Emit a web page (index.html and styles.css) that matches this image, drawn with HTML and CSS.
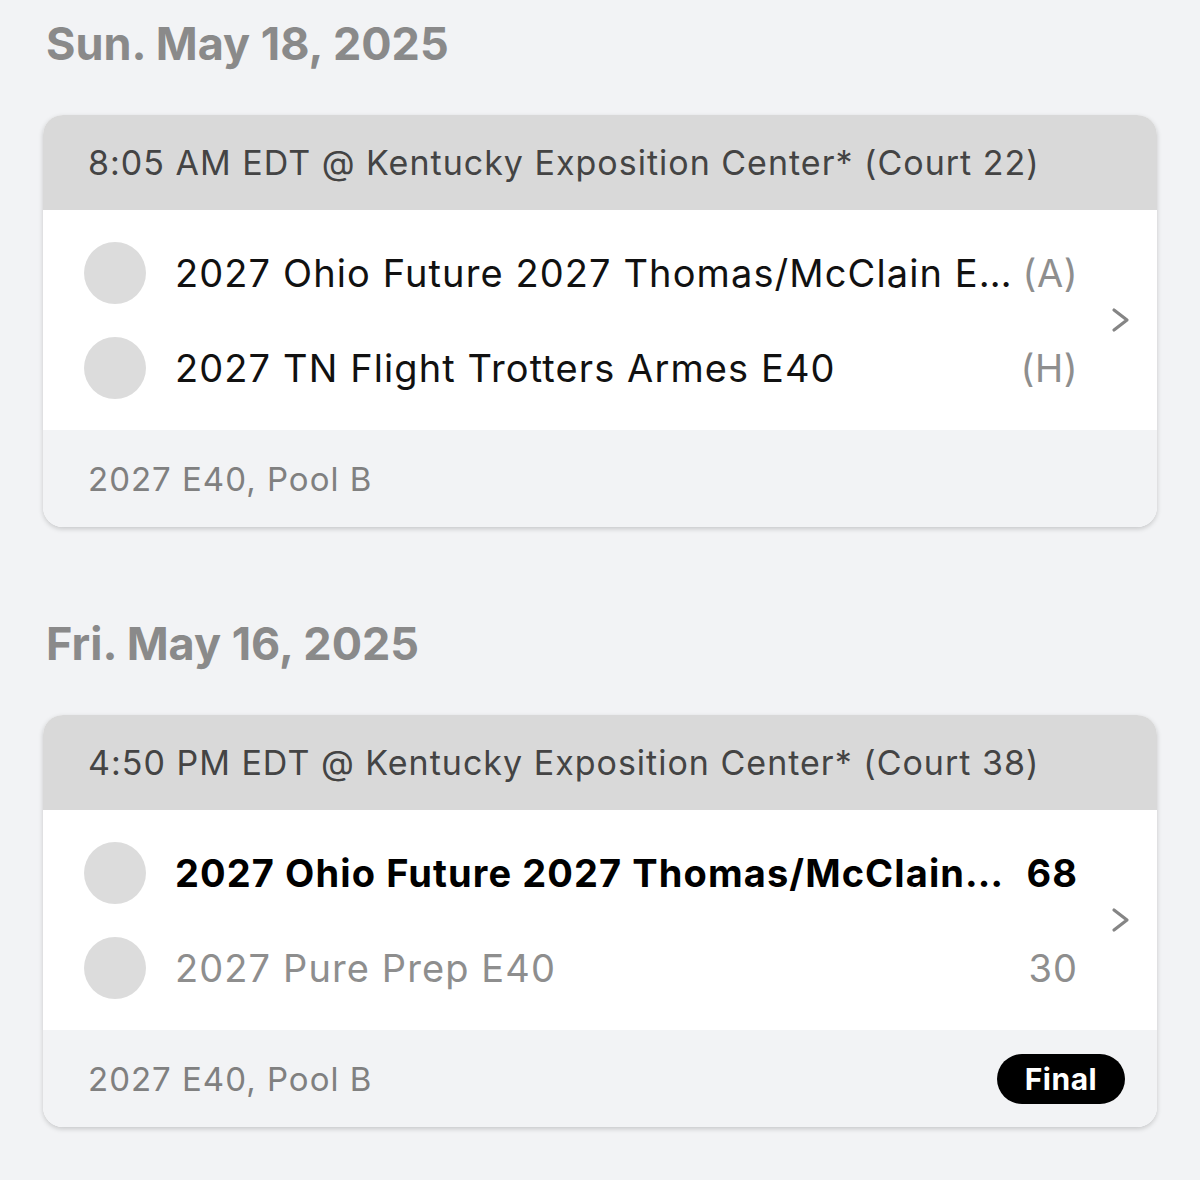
FILE: index.html
```html
<!DOCTYPE html>
<html>
<head>
<meta charset="utf-8">
<link rel="stylesheet" href="styles.css">
</head>
<body>
<div class="page">
  <section class="day">
    <h2 class="date">Sun. May 18, 2025</h2>
    <div class="card">
      <div class="card-head">8:05 AM EDT @ Kentucky Exposition Center* (Court 22)</div>
      <div class="card-body">
        <div class="rows">
          <div class="row">
            <span class="logo"></span>
            <span class="team">2027 Ohio Future 2027 Thomas/McClain E40</span>
            <span class="side">(A)</span>
          </div>
          <div class="row">
            <span class="logo"></span>
            <span class="team">2027 TN Flight Trotters Armes E40</span>
            <span class="side">(H)</span>
          </div>
        </div>
        <svg class="chev" width="20" height="28" viewBox="0 0 20 28"><path d="M3 4 L16 14 L3 24" fill="none" stroke="#858585" stroke-width="3.2" stroke-linecap="round" stroke-linejoin="round"/></svg>
      </div>
      <div class="card-foot"><span class="pool">2027 E40, Pool B</span></div>
    </div>
  </section>
  <section class="day">
    <h2 class="date">Fri. May 16, 2025</h2>
    <div class="card">
      <div class="card-head">4:50 PM EDT @ Kentucky Exposition Center* (Court 38)</div>
      <div class="card-body">
        <div class="rows">
          <div class="row">
            <span class="logo"></span>
            <span class="team win">2027 Ohio Future 2027 Thomas/McClain E40</span>
            <span class="score win">68</span>
          </div>
          <div class="row">
            <span class="logo"></span>
            <span class="team lose">2027 Pure Prep E40</span>
            <span class="score lose">30</span>
          </div>
        </div>
        <svg class="chev" width="20" height="28" viewBox="0 0 20 28"><path d="M3 4 L16 14 L3 24" fill="none" stroke="#858585" stroke-width="3.2" stroke-linecap="round" stroke-linejoin="round"/></svg>
      </div>
      <div class="card-foot"><span class="pool">2027 E40, Pool B</span><span class="badge">Final</span></div>
    </div>
  </section>
</div>
</body>
</html>
```

FILE: styles.css
```css
html, body {
  margin: 0;
  padding: 0;
  background: #f2f3f5;
  font-family: Inter, "Noto Sans", sans-serif;
}
.page {
  padding: 0 43px 0 43px;
}
.day {
  padding-bottom: 73px;
}
.date {
  margin: 0;
  height: 115px;
  box-sizing: border-box;
  padding: 16px 0 0 3px;
  font-size: 45px;
  line-height: 56px;
  font-weight: 700;
  color: #8a8a8a;
  letter-spacing: 0;
}
.card {
  border-radius: 20px;
  overflow: hidden;
  background: #fff;
  box-shadow: 0 2px 5px rgba(0,0,0,0.18);
}
.card-head {
  height: 95px;
  background: #d9d9d9;
  display: flex;
  align-items: center;
  padding-left: 45px;
  font-size: 34px;
  color: #444;
  letter-spacing: 1px;
}
.card-body {
  height: 220px;
  background: #fff;
  display: flex;
  align-items: center;
  padding: 0 26px 0 41px;
}
.rows {
  flex: 1;
  min-width: 0;
  padding-right: 33px;
}
.row {
  height: 95px;
  display: flex;
  align-items: center;
}
.logo {
  width: 62px;
  height: 62px;
  border-radius: 50%;
  background: #dcdcdc;
  flex: none;
  margin-right: 29px;
}
.team {
  flex: 1;
  min-width: 0;
  white-space: nowrap;
  overflow: hidden;
  text-overflow: ellipsis;
  font-size: 38px;
  color: #111;
  letter-spacing: 1.1px;
}
.side {
  flex: none;
  font-size: 38px;
  color: #8e8e8e;
  margin-left: 6px;
  letter-spacing: 0.5px;
}
.score {
  flex: none;
  font-size: 38px;
  margin-left: 16px;
  letter-spacing: 1px;
}
.win {
  font-weight: 700;
  color: #000;
}
.lose {
  color: #8e8e8e;
}
.chev {
  flex: none;
}
.card-foot {
  height: 97px;
  background: #f2f3f5;
  display: flex;
  align-items: center;
  justify-content: space-between;
  padding: 0 32px 0 45px;
}
.pool {
  font-size: 33px;
  color: #808080;
  letter-spacing: 1px;
}
.badge {
  background: #000;
  color: #fff;
  font-weight: 700;
  font-size: 30px;
  height: 50px;
  width: 128px;
  border-radius: 25px;
  display: flex;
  align-items: center;
  justify-content: center;
  letter-spacing: 0.5px;
}
```
